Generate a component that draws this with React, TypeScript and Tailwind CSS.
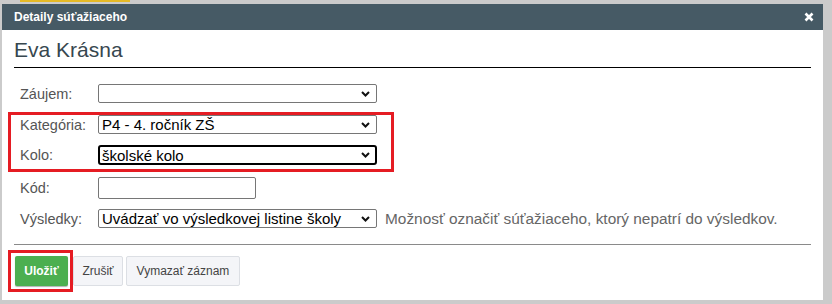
import type { ReactNode } from "react";

const font = { fontFamily: '"Liberation Sans", Arial, sans-serif' };

function Chevron() {
  return (
    <svg
      className="pointer-events-none absolute right-[7px] top-1/2 -translate-y-1/2"
      width="9"
      height="6"
      viewBox="0 0 9 6"
    >
      <path d="M1 1l3.5 3.5L8 1" fill="none" stroke="#111" strokeWidth="2" />
    </svg>
  );
}

function Select({
  value,
  focused,
  className,
}: {
  value: string;
  focused?: boolean;
  className?: string;
}) {
  return (
    <div className={"relative " + (className ?? "w-[279px]")}>
      <div
        className={
          focused
            ? "flex h-[20px] items-center rounded-[3px] border-2 border-black bg-white pl-[2px] text-[15px] leading-none text-black"
            : "flex h-[19px] items-center rounded-[2px] border border-[#767676] bg-white pl-[3px] text-[15px] leading-none text-black"
        }
      >
        {value}
      </div>
      <Chevron />
    </div>
  );
}

function Row({ label, children }: { label: string; children: ReactNode }) {
  return (
    <div className="flex items-center">
      <div className="w-[78px] text-[14.5px] leading-[18px] text-[#555]">{label}</div>
      {children}
    </div>
  );
}

export default function App() {
  return (
    <div className="h-[304px] w-[832px] overflow-hidden bg-[#cbcbcb]" style={font}>
      <div className="h-[4px] pl-[20px]">
        <div className="h-[2px] w-[110px] bg-[#e5b925]" />
      </div>
      <div className="ml-[2px] flex h-[296px] w-[821px] flex-col bg-white">
        <div className="flex h-[26px] items-center justify-between bg-[#465a65] pl-[12px] pr-[9px]">
          <span className="text-[12px] font-bold text-white">Detaily súťažiaceho</span>
          <svg width="10" height="10" viewBox="0 0 10 10">
            <path d="M1.5 1.5l7 7M8.5 1.5l-7 7" stroke="#fff" strokeWidth="2.6" />
          </svg>
        </div>

        <div className="flex flex-col px-[12px]">
          <h1 className="pt-[7px] text-[21px] leading-[26px] text-[#37474f]">Eva Krásna</h1>
          <div className="mt-[4px] h-px bg-black" />

          <div className="-ml-[6px] mt-[16px] flex flex-col">
            <div className="pl-[12px]">
              <Row label="Záujem:">
                <Select value="" />
              </Row>
            </div>

            <div className="mt-[9px] flex w-[386px] flex-col gap-[11px] border-[3px] border-[#e51c23] pb-[4px] pl-[9px]">
              <Row label="Kategória:">
                <Select value="P4 - 4. ročník ZŠ" />
              </Row>
              <Row label="Kolo:">
                <Select value="školské kolo" focused />
              </Row>
            </div>

            <div className="mt-[5px] flex flex-col gap-[10px] pl-[12px]">
              <Row label="Kód:">
                <div className="h-[22px] w-[158px] rounded-[2px] border border-[#767676] bg-white" />
              </Row>
              <Row label="Výsledky:">
                <Select value="Uvádzať vo výsledkovej listine školy" />
                <span className="ml-[8px] text-[15.4px] leading-[18px] text-[#666]">
                  Možnosť označiť súťažiaceho, ktorý nepatrí do výsledkov.
                </span>
              </Row>
            </div>
          </div>

          <div className="mt-[16px] h-px bg-[#8a8a8a]" />

          <div className="-ml-[6px] mt-[5px] flex items-center">
            <div className="border-[3px] border-[#e51c23] py-[3px] pl-[4px] pr-[2px]">
              <button className="h-[30px] w-[53px] rounded-[2px] bg-[#4caf50] text-[12px] font-bold text-white shadow-[0_1px_1px_rgba(0,0,0,0.3)]">
                Uložiť
              </button>
            </div>
            <button className="h-[30px] w-[50px] rounded-[2px] border border-[#dcdfe4] bg-[#f4f5f8] text-[12px] text-[#444]">
              Zrušiť
            </button>
            <button className="ml-[3px] h-[30px] w-[114px] rounded-[2px] border border-[#dcdfe4] bg-[#f4f5f8] text-[12px] text-[#444]">
              Vymazať záznam
            </button>
          </div>
        </div>
      </div>
    </div>
  );
}
